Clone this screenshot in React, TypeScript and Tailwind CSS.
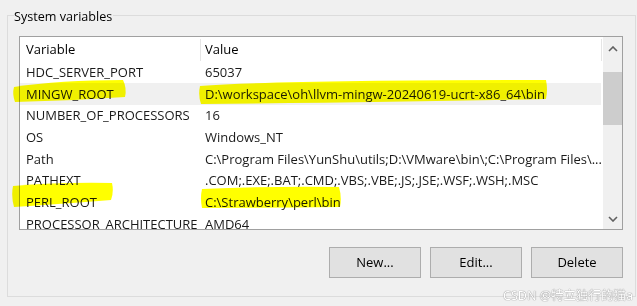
import React from "react";

const rows: { name: string; value: string; hover?: boolean }[] = [
  { name: "HDC_SERVER_PORT", value: "65037" },
  { name: "MINGW_ROOT", value: "D:\\workspace\\oh\\llvm-mingw-20240619-ucrt-x86_64\\bin", hover: true },
  { name: "NUMBER_OF_PROCESSORS", value: "16" },
  { name: "OS", value: "Windows_NT" },
  { name: "Path", value: "C:\\Program Files\\YunShu\\utils;D:\\VMware\\bin\\;C:\\Program Files\\..." },
  { name: "PATHEXT", value: ".COM;.EXE;.BAT;.CMD;.VBS;.VBE;.JS;.JSE;.WSF;.WSH;.MSC" },
  { name: "PERL_ROOT", value: "C:\\Strawberry\\perl\\bin" },
  { name: "PROCESSOR_ARCHITECTURE", value: "AMD64" },
];

function Chevron({ up }: { up?: boolean }) {
  return (
    <svg width="10" height="6" viewBox="0 0 10 6">
      <polyline
        points={up ? "1,5 5,1 9,5" : "1,1 5,5 9,1"}
        fill="none"
        stroke="#606060"
        strokeWidth="1.6"
      />
    </svg>
  );
}

export default function App() {
  return (
    <div
      className="relative w-[637px] h-[306px] overflow-hidden bg-[#f0f0f0] text-[#000]"
      style={{ fontFamily: '"Open Sans", "Noto Sans CJK SC", sans-serif' }}
    >
      <div className="pt-[15px] pl-[7px]">
        <div className="relative w-[629px] h-[282px] border border-[#dcdcdc]">
          <div className="absolute left-[6px] top-[-8px] bg-[#f0f0f0] pr-[1px] text-[12.6px] leading-[18px]">
            System variables
          </div>
          <div className="ml-[11px] mt-[20px] w-[604px] h-[194px] border border-[#a0a0a0] bg-white flex overflow-hidden">
            <div className="w-[583px] flex flex-col text-[13px]">
              <div className="h-[24.3px] shrink-0 flex items-center pt-[2px]">
                <div className="w-[180px] pl-[6px]">Variable</div>
                <div className="w-[1px] h-full bg-[#e5e5e5]" />
                <div className="flex-1 pl-[4px]">Value</div>
                <div className="w-[1px] h-full bg-[#e5e5e5] mr-[1px]" />
              </div>
              {rows.map((r) => (
                <div
                  key={r.name}
                  className={`h-[21.7px] shrink-0 flex items-center pt-[1px] mr-[2px] ${r.hover ? "bg-[#f0f0f0]" : ""}`}
                >
                  <div className="w-[181px] pl-[6px] whitespace-nowrap overflow-hidden text-[#1a1a1a]">{r.name}</div>
                  <div className="flex-1 pl-[4px] whitespace-nowrap overflow-hidden text-[#1a1a1a]">{r.value}</div>
                </div>
              ))}
            </div>
            <div className="w-[19px] bg-[#f0f0f0] flex flex-col">
              <div className="h-[24px] flex items-center justify-center">
                <Chevron up />
              </div>
              <div className="h-[11px]" />
              <div className="h-[53px] bg-[#cdcdcd]" />
              <div className="flex-1" />
              <div className="h-[20px] flex items-center justify-center">
                <Chevron />
              </div>
            </div>
          </div>
          <div className="mt-[17px] ml-[11px] w-[604px] flex justify-end gap-[9px] text-[13px]">
            {["New...", "Edit...", "Delete"].map((b) => (
              <button
                key={b}
                className="w-[92px] h-[31px] border border-[#adadad] bg-[#e1e1e1] flex items-center justify-center text-[#000]"
              >
                {b}
              </button>
            ))}
          </div>
        </div>
      </div>

      <svg
        className="absolute left-0 top-0 pointer-events-none mix-blend-multiply"
        width="637"
        height="306"
        viewBox="0 0 637 306"
      >
        <g fill="#ffff00">
          <path d="M14,87 Q60,80 123,80 Q127,88 125,97 Q70,101 15,102 Q12,94 14,87 Z" />
          <path d="M200,86 Q280,80 546,80 Q548,90 546,99 Q400,102 201,104 Q198,95 200,86 Z" />
          <path d="M13,186 Q60,182 112,183 Q114,192 111,200 Q60,204 14,207 Q11,196 13,186 Z" />
          <path d="M202,189 Q270,186 339,187 Q342,197 340,207 Q270,208 202,208 Q200,198 202,189 Z" />
        </g>
      </svg>

      <div
        className="absolute right-[4px] bottom-[3px] text-[12.5px] leading-[14px] text-white [text-shadow:0_0_1px_#8a8a8a,0_0_1px_#8a8a8a]"
        style={{ fontFamily: '"Noto Sans", "Noto Sans CJK SC", sans-serif' }}
      >
        CSDN @特立独行的猫a
      </div>
    </div>
  );
}
